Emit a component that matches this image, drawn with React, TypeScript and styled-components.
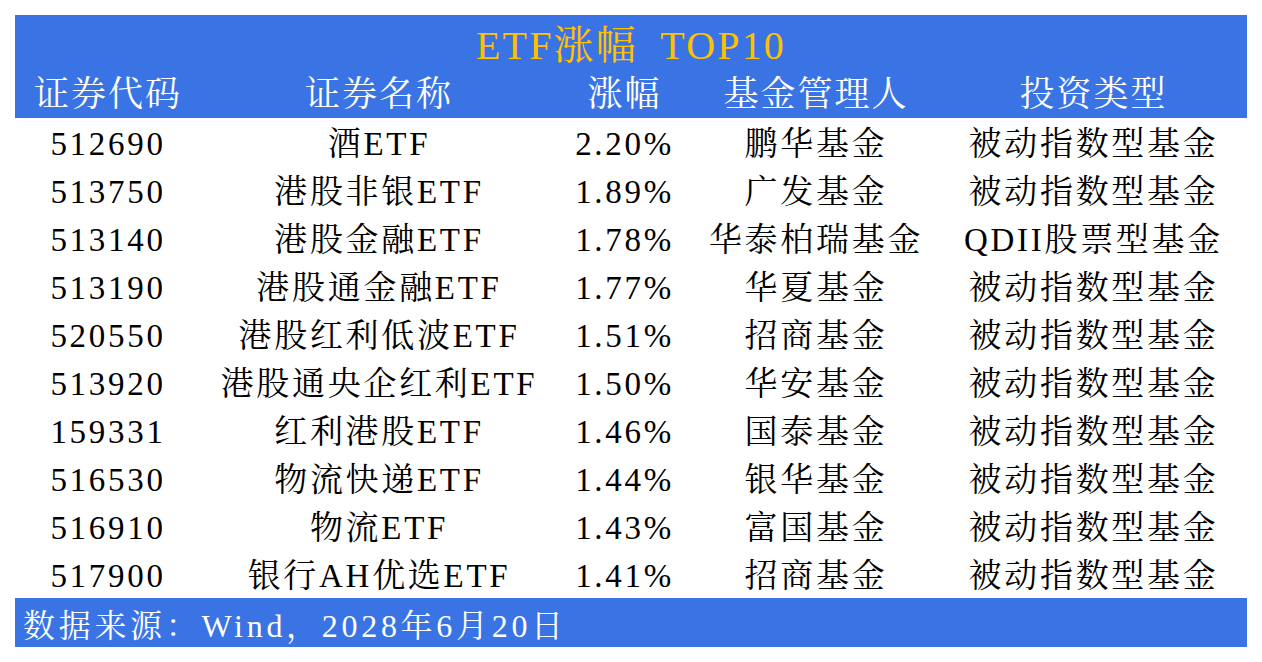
import React from "react";
import styled, { createGlobalStyle } from "styled-components";

const GlobalStyle = createGlobalStyle`
  html, body { margin: 0; padding: 0; background: #ffffff; }
  body { font-family: "Liberation Serif", "Noto Serif CJK SC", "Noto Sans CJK SC", serif; }
`;

const BLUE = "#3a73e4";
const COLS = "186px 356px 135px 248px 307px";

const Page = styled.div`
  width: 1262px;
  height: 662px;
  padding: 15px 0 0 15px;
  box-sizing: border-box;
  background: #ffffff;
`;

const Panel = styled.div`
  width: 1232px;
  display: flex;
  flex-direction: column;
`;

const Header = styled.div`
  background: ${BLUE};
  height: 103px;
  display: flex;
  flex-direction: column;
`;

const Title = styled.div`
  height: 58px;
  display: flex;
  align-items: center;
  justify-content: center;
  padding-top: 3px;
  box-sizing: border-box;
  color: #ffc000;
  font-size: 40px;
  letter-spacing: 2.2px;
  word-spacing: 10px;
  line-height: 1;
  white-space: pre;
`;

const Grid = styled.div<{ $h: number }>`
  display: grid;
  grid-template-columns: ${COLS};
  height: ${(p) => p.$h}px;
  align-items: center;
`;

const HeadCell = styled.div`
  text-align: center;
  color: #ffffff;
  font-size: 35px;
  letter-spacing: 2px;
  line-height: 1;
  white-space: nowrap;
  padding-bottom: 3px;
`;

const Body = styled.div`
  display: flex;
  flex-direction: column;
  background: #ffffff;
`;

const Cell = styled.div`
  text-align: center;
  color: #000000;
  font-size: 33px;
  letter-spacing: 2.7px;
  line-height: 1;
  white-space: nowrap;
  padding-top: 5px;
`;

const Footer = styled.div`
  background: ${BLUE};
  height: 49px;
  display: flex;
  align-items: center;
  padding: 7px 0 0 8px;
  box-sizing: border-box;
  color: #ffffff;
  font-size: 32px;
  letter-spacing: 3.7px;
  line-height: 1;
  white-space: nowrap;
`;

const heads = ["证券代码", "证券名称", "涨幅", "基金管理人", "投资类型"];

const rows: string[][] = [
  ["512690", "酒ETF", "2.20%", "鹏华基金", "被动指数型基金"],
  ["513750", "港股非银ETF", "1.89%", "广发基金", "被动指数型基金"],
  ["513140", "港股金融ETF", "1.78%", "华泰柏瑞基金", "QDII股票型基金"],
  ["513190", "港股通金融ETF", "1.77%", "华夏基金", "被动指数型基金"],
  ["520550", "港股红利低波ETF", "1.51%", "招商基金", "被动指数型基金"],
  ["513920", "港股通央企红利ETF", "1.50%", "华安基金", "被动指数型基金"],
  ["159331", "红利港股ETF", "1.46%", "国泰基金", "被动指数型基金"],
  ["516530", "物流快递ETF", "1.44%", "银华基金", "被动指数型基金"],
  ["516910", "物流ETF", "1.43%", "富国基金", "被动指数型基金"],
  ["517900", "银行AH优选ETF", "1.41%", "招商基金", "被动指数型基金"],
];

export default function App() {
  return (
    <Page>
      <GlobalStyle />
      <Panel>
        <Header>
          <Title>ETF涨幅 TOP10</Title>
          <Grid $h={45}>
            {heads.map((h) => (
              <HeadCell key={h}>{h}</HeadCell>
            ))}
          </Grid>
        </Header>
        <Body>
          {rows.map((r) => (
            <Grid $h={48} key={r[0]}>
              {r.map((c, i) => (
                <Cell key={i}>{c}</Cell>
              ))}
            </Grid>
          ))}
        </Body>
        <Footer>数据来源：Wind，2028年6月20日</Footer>
      </Panel>
    </Page>
  );
}
